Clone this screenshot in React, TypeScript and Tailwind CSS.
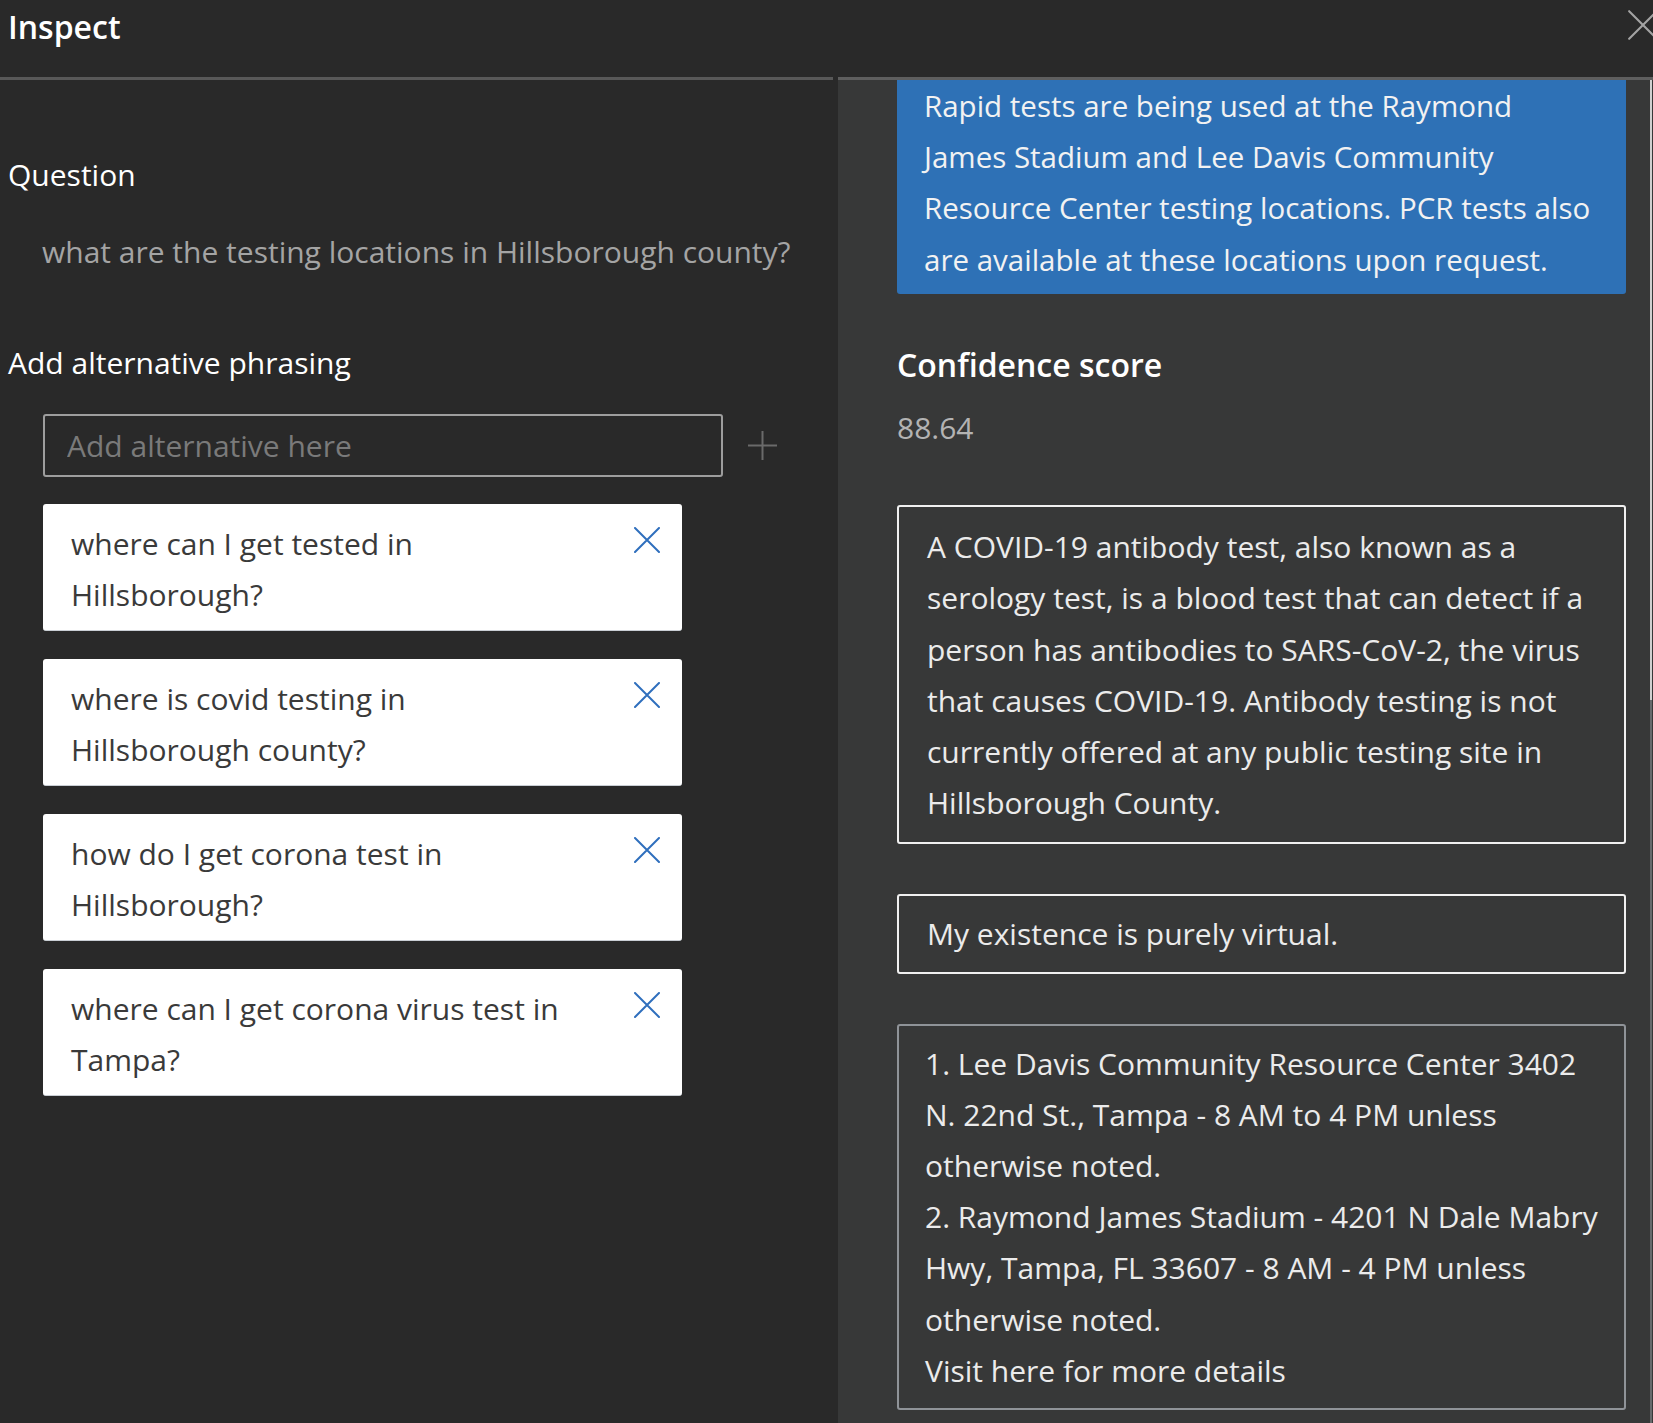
import React from 'react';

const alternatives = [
  'where can I get tested in Hillsborough?',
  'where is covid testing in Hillsborough county?',
  'how do I get corona test in Hillsborough?',
  'where can I get corona virus test in Tampa?',
];

function Cross({ size, color, width }: { size: number; color: string; width: number }) {
  return (
    <svg width={size} height={size} viewBox="0 0 26 26" fill="none" className="shrink-0">
      <path d="M1 1L25 25M25 1L1 25" stroke={color} strokeWidth={width} strokeLinecap="round" />
    </svg>
  );
}

function AlternativeCard({ text }: { text: string }) {
  return (
    <li className="flex bg-white rounded-[3px] border-b border-[#c9ced4] pl-7 pr-[22px] pt-3.5 pb-2.5">
      <p className="w-[515px] text-[30px] leading-[51px] text-[#3a3a3a]">{text}</p>
      <button type="button" className="ml-auto mt-[9px] h-fit cursor-pointer">
        <Cross size={26} color="#2f6fbd" width={2} />
      </button>
    </li>
  );
}

export default function App() {
  return (
    <div className="w-[1653px] h-[1423px] overflow-hidden flex flex-col bg-[#292929] font-['Open_Sans',sans-serif]">
      <header className="flex h-[80px] shrink-0">
        <div className="w-[833px] border-b-[3px] border-[#585858] pl-2 pt-[7px]">
          <h1 className="text-[32px] leading-[40px] font-semibold text-white">Inspect</h1>
        </div>
        <div className="flex-1 ml-[5px] border-b-[3px] border-[#5e5e5e] flex justify-end">
          <button type="button" className="mt-[10px] -mr-[5px] h-fit cursor-pointer">
            <Cross size={30} color="#a3a3a3" width={1.8} />
          </button>
        </div>
      </header>

      <div className="flex flex-1 min-h-0">
        <section className="w-[838px] shrink-0 pl-2 pt-[69px]">
          <h2 className="text-[30px] leading-[51px] text-white">Question</h2>
          <p className="mt-[26px] pl-[34px] text-[30px] leading-[51px] text-[#a4a4a4]">
            what are the testing locations in Hillsborough county?
          </p>

          <h2 className="mt-[60px] text-[30px] leading-[51px] text-white">Add alternative phrasing</h2>
          <div className="mt-[26px] ml-[35px] flex items-center">
            <input
              type="text"
              placeholder="Add alternative here"
              className="w-[680px] h-[63px] border-2 border-[#9d9d9d] rounded-[3px] bg-transparent pl-[22px] text-[30px] text-white outline-none placeholder:text-[#7a7a7a]"
            />
            <button type="button" className="ml-[25px] cursor-pointer">
              <svg width="29" height="29" viewBox="0 0 29 29" fill="none">
                <path d="M14.5 0V29M0 14.5H29" stroke="#6a6a6a" strokeWidth="2" />
              </svg>
            </button>
          </div>

          <ul className="mt-[27px] ml-[35px] w-[639px] flex flex-col gap-[28px]">
            {alternatives.map((alt) => (
              <AlternativeCard key={alt} text={alt} />
            ))}
          </ul>
        </section>

        <section className="flex-1 flex bg-[#373838] overflow-hidden">
          <div className="w-[729px] ml-[59px] text-[30px] leading-[51.2px]">
            <div className="bg-[#2e71b6] rounded-b-[3px] pl-[27px] pr-[30px] pb-[9px] text-[29.5px] text-[#f2f2f2]">
              Rapid tests are being used at the Raymond James Stadium and Lee Davis Community Resource Center
              testing locations. PCR tests also are available at these locations upon request.
            </div>

            <h3 className="mt-[45px] text-[32px] font-semibold text-white">Confidence score</h3>
            <p className="mt-[12px] text-[#b3b3b3]">88.64</p>

            <div className="mt-[52px] border-2 border-[#f0f0f0] rounded-[3px] px-7 py-3.5 text-[#ebebeb]">
              A COVID-19 antibody test, also known as a serology test, is a blood test that can detect if a
              person has antibodies to SARS-CoV-2, the virus that causes COVID-19. Antibody testing is not
              currently offered at any public testing site in Hillsborough County.
            </div>

            <div className="mt-[50px] border-2 border-[#f0f0f0] rounded-[3px] px-7 py-3 text-[#ebebeb]">
              My existence is purely virtual.
            </div>

            <div className="mt-[50px] border-2 border-[#8f9398] rounded-[3px] pl-[26px] pr-[24px] py-3 text-[#ebebeb]">
              <p>1. Lee Davis Community Resource Center 3402 N. 22nd St., Tampa - 8 AM to 4 PM unless otherwise noted.</p>
              <p>2. Raymond James Stadium - 4201 N Dale Mabry Hwy, Tampa, FL 33607 - 8 AM - 4 PM unless otherwise noted.</p>
              <p>Visit here for more details</p>
            </div>
          </div>

          <div className="ml-auto mr-px w-[2px] flex flex-col">
            <div className="h-[620px] bg-[#cfcfcf]" />
            <div className="flex-1 bg-[#666a6c]" />
          </div>
        </section>
      </div>
    </div>
  );
}
